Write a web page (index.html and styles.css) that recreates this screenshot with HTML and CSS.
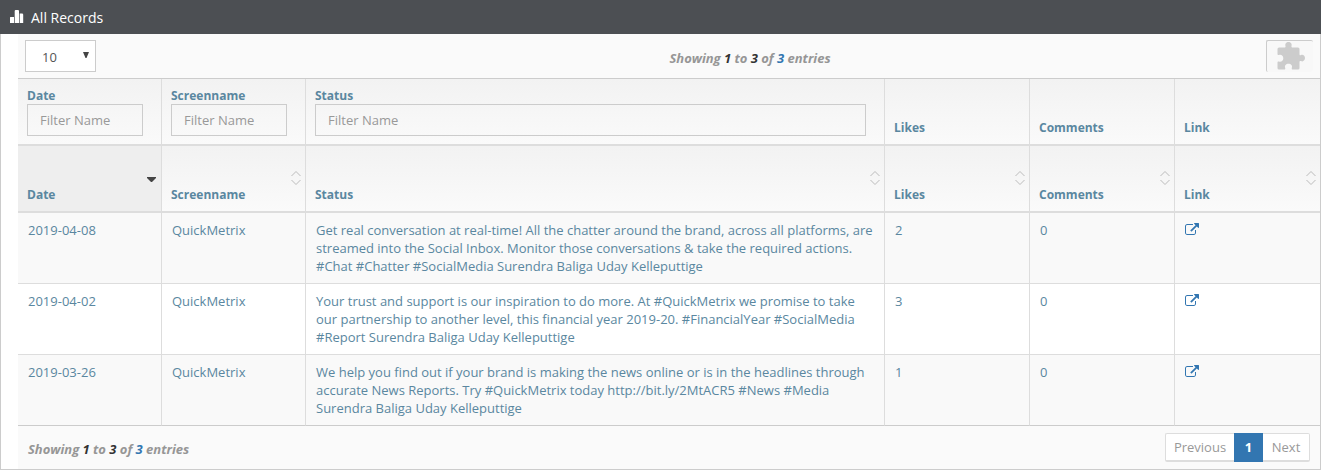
FILE: index.html
```html
<!DOCTYPE html>
<html lang="en">
<head>
<meta charset="utf-8">
<title>All Records</title>
<link rel="stylesheet" href="styles.css">
</head>
<body>
<svg class="defs" aria-hidden="true">
  <symbol id="sort" viewBox="0 0 10 14"><path d="M.5 5 5 .5 9.500 5M.5 9 5 13.500 9.500 9"/></symbol>
  <symbol id="external" viewBox="0 0 1792 1664"><path d="M1408 928v320q0 119-84.500 203.500T1120 1536H288q-119 0-203.500-84.500T0 1248V416q0-119 84.500-203.500T288 128h704q14 0 23 9t9 23v64q0 14-9 23t-23 9H288q-66 0-113 47t-47 113v832q0 66 47 113t113 47h832q66 0 113-47t47-113V928q0-14 9-23t23-9h64q14 0 23 9t9 23zM1792 64v512q0 26-19 45t-45 19-45-19l-176-176-652 652q-10 10-23 10t-23-10L695 983q-10-10-10-23t10-23l652-652-176-176q-19-19-19-45t19-45 45-19h512q26 0 45 19t19 45z"/></symbol>
</svg>
<section class="widget">
  <header class="title-bar">
    <svg class="chart-icon" viewBox="0 0 14 13"><path d="M0 7.500q0-.5.500-.5H4v6H0zM4.700 1q0-1 1-1H8q1 0 1 1v12H4.700zM9.700 3.500H12q1.200 0 1.200 1V13H9.700z"/></svg>
    <h1>All Records</h1>
  </header>
  <div class="content">
    <div class="toolbar">
      <div class="length"><span>10</span><svg viewBox="0 0 6 7"><path d="M0 0h6L3.500 6h-1z"/></svg></div>
      <div class="info">Showing <b>1</b> to <b>3</b> of <i>3</i> entries</div>
      <button class="plugin" type="button"><svg viewBox="0 0 28 28"><path d="M2 5.500h5c1.200 0 1.800-.5 1.500-1.500C7.700 1.700 9.300 0 11.500 0s3.800 1.700 3 4c-.3 1 .3 1.500 1.500 1.500h5q1.500 0 1.500 1.500v5c0 1.200.6 1.600 1.500 1.100 2-.9 4 .7 4 3s-2 4-4 3c-.9-.4-1.500 0-1.500 1.100V26q0 1.500-1.500 1.500h-5c-1 0-1.500-.5-1.200-1.500.9-2.300-.8-4.200-3.300-4.200S7.300 23.700 8.200 26c.3 1-.2 1.500-1.200 1.500H2Q.5 27.500.5 26v-5.200c0-1 .5-1.500 1.500-1.200 2.200.8 4.300-.9 4.300-3.300S4.200 12.200 2 13c-1 .3-1.500-.2-1.500-1.200V7q0-1.500 1.500-1.500z"/></svg></button>
    </div>
    <table class="records">
      <colgroup><col class="c-narrow"><col class="c-narrow"><col class="c-status"><col class="c-num"><col class="c-num"><col class="c-link"></colgroup>
      <thead>
        <tr>
          <th>Date<input placeholder="Filter Name"></th>
          <th>Screenname<input placeholder="Filter Name"></th>
          <th>Status<input class="wide" placeholder="Filter Name"></th>
          <th>Likes</th><th>Comments</th><th>Link</th>
        </tr>
        <tr class="sort-row">
          <th class="sorted"><div>Date<svg class="caret" viewBox="0 0 9 5"><path d="M0 0h9v1L5 5H4L0 1z"/></svg></div></th>
          <th><div>Screenname<svg class="sort"><use href="#sort"/></svg></div></th>
          <th><div>Status<svg class="sort"><use href="#sort"/></svg></div></th>
          <th><div>Likes<svg class="sort"><use href="#sort"/></svg></div></th>
          <th><div>Comments<svg class="sort"><use href="#sort"/></svg></div></th>
          <th><div>Link<svg class="sort"><use href="#sort"/></svg></div></th>
        </tr>
      </thead>
      <tbody>
        <tr>
          <td>2019-04-08</td><td>QuickMetrix</td>
          <td>Get real conversation at real-time! All the chatter around the brand, across all platforms, are<br>streamed into the Social Inbox. Monitor those conversations &amp; take the required actions.<br>#Chat #Chatter #SocialMedia Surendra Baliga Uday Kelleputtige</td>
          <td>2</td><td>0</td><td><svg class="ext"><use href="#external"/></svg></td>
        </tr>
        <tr>
          <td>2019-04-02</td><td>QuickMetrix</td>
          <td>Your trust and support is our inspiration to do more. At #QuickMetrix we promise to take<br>our partnership to another level, this financial year 2019-20. #FinancialYear #SocialMedia<br>#Report Surendra Baliga Uday Kelleputtige</td>
          <td>3</td><td>0</td><td><svg class="ext"><use href="#external"/></svg></td>
        </tr>
        <tr>
          <td>2019-03-26</td><td>QuickMetrix</td>
          <td>We help you find out if your brand is making the news online or is in the headlines through<br>accurate News Reports. Try #QuickMetrix today http://bit.ly/2MtACR5 #News #Media<br>Surendra Baliga Uday Kelleputtige</td>
          <td>1</td><td>0</td><td><svg class="ext"><use href="#external"/></svg></td>
        </tr>
      </tbody>
    </table>
    <footer class="footer">
      <div class="info">Showing <b>1</b> to <b>3</b> of <i>3</i> entries</div>
      <nav class="pager"><span class="prev">Previous</span><span class="current">1</span><span class="next">Next</span></nav>
    </footer>
  </div>
</section>
</body>
</html>
```
FILE: styles.css
```css
* { box-sizing: border-box; }
body { margin: 0; background: #fff; font: 13px/18px "Open Sans", Arial, sans-serif; color: #5a87a0; }
.defs { display: none; }
.widget { width: 1321px; }
.title-bar { height: 34px; padding: 1px 0 0 10px; display: flex; align-items: center; gap: 7px; background: #4c4f53; color: #fff; }
.title-bar h1 { margin: 0; font-size: 14px; font-weight: 400; letter-spacing: 0; }
.chart-icon { width: 14px; height: 13px; fill: #fff; margin-top: -3px; }
.content { height: 436px; border: solid #ccc; border-width: 0 1px 1px; padding-left: 17px; }
.toolbar { height: 45px; padding: 6px 7px; display: flex; justify-content: space-between; align-items: flex-start; background: #fafafa; border-bottom: 1px solid #ccc; }
.length { width: 71px; height: 32px; padding: 1px 6px 0 16px; display: flex; align-items: center; justify-content: space-between; border: 1px solid #ccc; background: #fff; color: #555; }
.length svg { width: 6px; height: 7px; fill: #444; margin-top: -2px; }
.info { color: #969696; font-weight: 700; font-style: italic; font-size: 13px; letter-spacing: -.02px; }
.info b { color: #333; font-weight: 700; }
.info i { color: #3276b1; }
.toolbar .info { margin: 9px 0 0 138px; }
.plugin { width: 47px; height: 32px; padding: 1px 0 0 10px; display: flex; border: solid #ccc; border-width: 1px 0 0 1px; border-radius: 2px; background: #f8f8f8; }
.plugin svg { width: 28px; height: 28px; flex: none; fill: #ccc; }
.records { width: 1302px; table-layout: fixed; border-collapse: separate; border-spacing: 0; }
.c-narrow { width: 144px; }
.c-status { width: 579px; }
.c-num { width: 145px; }
.c-link { width: 145px; }
th { height: 67px; padding: 0 9px 8px; text-align: left; vertical-align: bottom; font-size: 12px; line-height: 17px; border: solid #ddd; border-width: 0 1px 2px 0; background: linear-gradient(#f2f2f2, #fafafa); }
th:last-child, td:last-child { border-right: 0; }
th input { display: block; width: 116px; height: 32px; padding: 0 12px; border: 1px solid #ccc; background: transparent; font: 13px "Open Sans", sans-serif; }
th input.wide { width: 551px; }
th input::placeholder { color: #999; opacity: 1; }
.sort-row th { padding-right: 4px; }
.sort-row div { display: flex; justify-content: space-between; align-items: flex-start; }
.sort { width: 10px; height: 14px; margin: -15px 0 0; fill: none; stroke: #bbb; }
.caret { width: 9px; height: 5px; margin: -9px 1px 0 0; fill: #444; }
.sorted { background: #eee; }
td { height: 71px; padding: 8px 10px; vertical-align: top; border: solid #ddd; border-width: 0 1px 1px 0; background: #fff; white-space: nowrap; }
tbody tr:nth-child(odd) td { background: #f9f9f9; }
tbody tr:last-child td { border-bottom-color: #ccc; }
.ext { display: block; width: 14px; height: 13px; margin-top: 2px; fill: #3276b1; }
.footer { height: 43px; padding: 7px 10px; display: flex; justify-content: space-between; background: #fafafa; }
.footer .info { margin-top: 7px; }
.pager { display: flex; height: 29px; line-height: 29px; text-align: center; color: #999; }
.pager span { border: 1px solid #ddd; border-bottom-width: 2px; line-height: 27px; background: #fff; }
.pager .prev { width: 69px; border-right: 0; border-radius: 2px 0 0 2px; }
.pager .current { width: 29px; border-color: #3276b1; background: #3276b1; color: #fff; font-weight: 700; }
.pager .next { width: 47px; border-left: 0; border-radius: 0 2px 2px 0; }
```
